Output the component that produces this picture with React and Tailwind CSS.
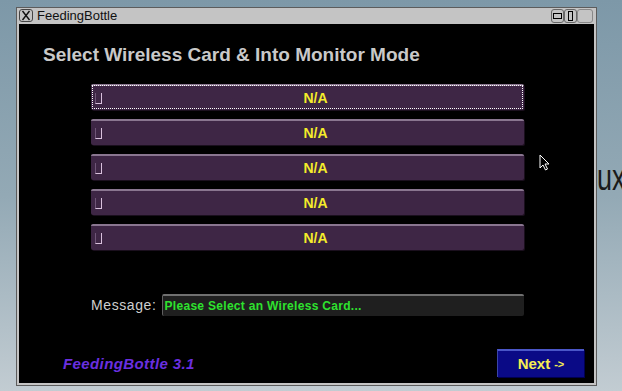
import React from "react";

const cards = ["N/A", "N/A", "N/A", "N/A", "N/A"];

function CardButton({ label, focused }) {
  return (
    <div
      className={`relative flex h-[26px] w-[433px] items-center rounded-[2px] border-t-2 border-t-[#8a7690] bg-[#3e2645] shadow-[1px_1px_0_#1a0f1d] ${
        focused ? "outline outline-1 outline-dotted outline-white -outline-offset-2" : ""
      }`}
    >
      <div className="ml-[4px] h-[11px] w-[7px] border-b border-r border-l border-b-[#d8c0dc] border-r-[#d8c0dc] border-l-[#6f5577]" />
      <span className="flex-1 pl-[5px] text-center text-[14px] font-bold text-[#f4ec2a]">{label}</span>
    </div>
  );
}

export default function App() {
  return (
    <div
      className="relative h-[391px] w-[622px] overflow-hidden bg-gradient-to-b from-[#7d98a8] via-[#93a9b5] to-[#c2ccd2]"
      style={{ fontFamily: '"Liberation Sans", Arial, sans-serif' }}
    >
      {/* desktop text behind the window */}
      <div className="absolute left-[597px] top-[160px] origin-left scale-x-75 text-[36px] leading-none text-[#1a1a1a]">ux</div>

      {/* window */}
      <div className="absolute left-[16px] top-[7px] flex h-[379px] w-[581px] flex-col border border-[#5c5c5c] bg-[#c4c4c4]">
        <div className="flex h-[15px] items-center pl-[2px] pr-[3px]">
          <div className="flex h-[13px] w-[14px] items-center justify-center rounded-[3px] border border-[#444] text-[12px] leading-none text-black">
            <svg width="10" height="11" viewBox="0 0 10 11">
              <path d="M1.5 1 L8.5 10 M8.5 1 L1.5 10" stroke="#111" strokeWidth="1.4" />
            </svg>
          </div>
          <span className="ml-[4px] text-[13px] leading-none text-[#111]">FeedingBottle</span>
          <div className="ml-auto flex items-center">
            <div className="flex h-[14px] w-[13px] items-center justify-center rounded-[3px] border border-[#666]">
              <div className="h-[6px] w-[9px] border border-black" />
            </div>
            <div className="flex h-[14px] w-[13px] items-center justify-center rounded-[3px] border border-[#666]">
              <div className="h-[10px] w-[5px] border border-black" />
            </div>
            <div className="h-[14px] w-[16px] rounded-[3px] border border-[#888]" />
          </div>
        </div>

        <div className="mx-[2px] mb-[2px] mt-[1px] flex flex-1 flex-col bg-black">
          <div className="ml-[24px] mt-[20px] text-[19px] font-bold leading-[22px] text-[#c9c9c9]">
            Select Wireless Card &amp; Into Monitor Mode
          </div>

          <div className="ml-[72px] mt-[18px] flex flex-col gap-[9px]">
            {cards.map((c, i) => (
              <CardButton key={i} label={c} focused={i === 0} />
            ))}
          </div>

          <div className="ml-[72px] mt-[44px] flex items-center">
            <span className="text-[14px] tracking-[0.6px] text-[#cfcfcf]">Message:</span>
            <div className="ml-[5px] flex h-[22px] w-[362px] items-center rounded-[2px] border-t-2 border-l border-t-[#707070] border-l-[#606060] bg-[#1f1f1f] pl-[2px]">
              <span className="text-[12px] font-bold tracking-[0.3px] text-[#2ee22e]">Please Select an Wireless Card...</span>
            </div>
          </div>

          <div className="mt-[33px] flex items-center">
            <span className="ml-[44px] mt-[2px] text-[15px] font-bold italic tracking-[0.4px] text-[#6a2fe0]">
              FeedingBottle 3.1
            </span>
            <div className="ml-auto mr-[10px] flex h-[28px] w-[87px] items-center justify-center border-t-2 border-l border-t-[#4a56c8] border-l-[#3a44a8] bg-[#0a0a86] shadow-[1px_1px_0_#000050]">
              <span className="text-[15px] font-bold text-[#f6ee52]">Next</span>
              <span className="ml-[4px] text-[11px] font-bold text-[#f6ee52]">-&gt;</span>
            </div>
          </div>
        </div>
      </div>

      {/* mouse cursor */}
      <svg className="absolute left-[539px] top-[154px]" width="12" height="18" viewBox="0 0 12 18">
        <path d="M1 1 L1 14 L4 11 L6.5 16 L8.5 15 L6 10 L10 10 Z" fill="#000" stroke="#fff" strokeWidth="1" />
      </svg>
    </div>
  );
}
